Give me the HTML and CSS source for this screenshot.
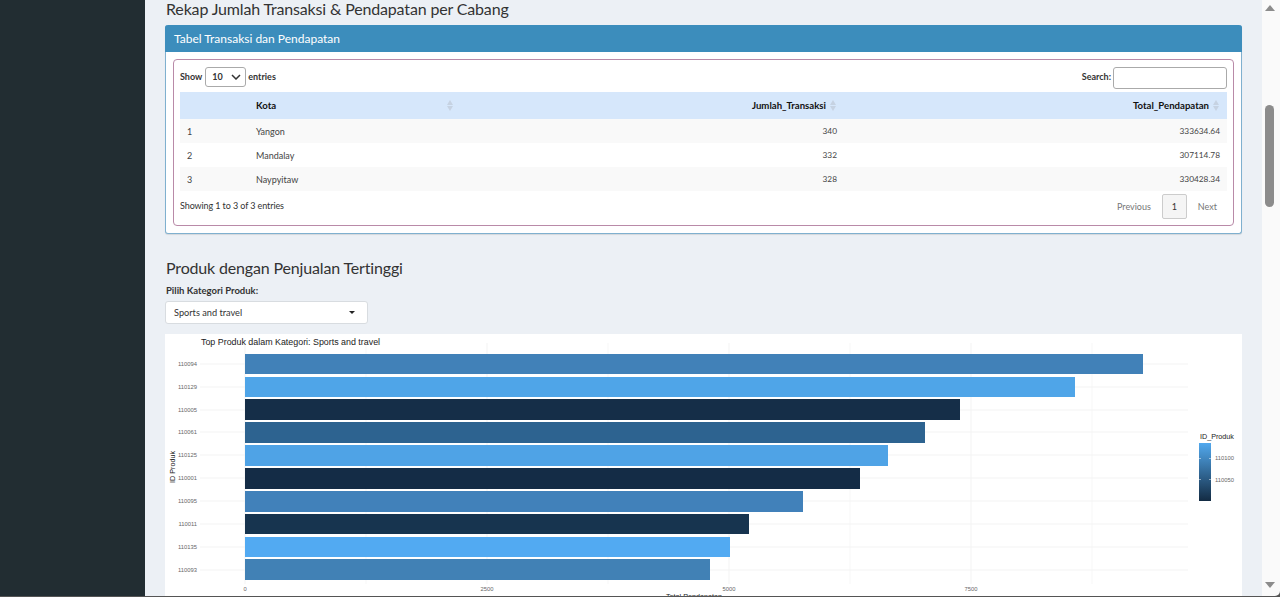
FILE: index.html
```html
<!DOCTYPE html>
<html lang="en">
<head>
  <meta charset="UTF-8" />
  <title>Dashboard Penjualan</title>
  <link rel="stylesheet" href="styles.css">
</head>
<body>
  <aside class="sidebar"></aside>

  <main class="content">
    <h3 class="section-title first">Rekap Jumlah Transaksi &amp; Pendapatan per Cabang</h3>

    <div class="box">
      <div class="box-header">Tabel Transaksi dan Pendapatan</div>
      <div class="box-body">
        <div class="dt-wrapper">
          <div class="dt-top">
            <div class="dt-length">
              <span>Show</span>
              <span class="length-select">10
                <svg width="10" height="6" viewBox="0 0 10 6"><path d="M1 1l4 4 4-4" fill="none" stroke="#333" stroke-width="1.5"/></svg>
              </span>
              <span>entries</span>
            </div>
            <div class="dt-search">
              <span>Search:</span>
              <input type="text" class="search-input">
            </div>
          </div>

          <table class="dt-table">
            <thead>
              <tr>
                <th class="col-no"></th>
                <th class="col-kota sorting">Kota</th>
                <th class="col-num col-jumlah sorting">Jumlah_Transaksi</th>
                <th class="col-num sorting">Total_Pendapatan</th>
              </tr>
            </thead>
            <tbody>
              <tr>
                <td>1</td>
                <td>Yangon</td>
                <td class="num">340</td>
                <td class="num">333634.64</td>
              </tr>
              <tr>
                <td>2</td>
                <td>Mandalay</td>
                <td class="num">332</td>
                <td class="num">307114.78</td>
              </tr>
              <tr>
                <td>3</td>
                <td>Naypyitaw</td>
                <td class="num">328</td>
                <td class="num">330428.34</td>
              </tr>
            </tbody>
          </table>

          <div class="dt-bottom">
            <div class="dt-info">Showing 1 to 3 of 3 entries</div>
            <div class="pagination">
              <span class="page-link">Previous</span>
              <span class="page-current">1</span>
              <span class="page-link">Next</span>
            </div>
          </div>
        </div>
      </div>
    </div>

    <h3 class="section-title second">Produk dengan Penjualan Tertinggi</h3>
    <label class="field-label">Pilih Kategori Produk:</label>
    <div class="picker">
      <span>Sports and travel</span>
      <span class="picker-caret"></span>
    </div>

    <div class="chart">
      <svg class="chart-svg" width="1077" height="263" viewBox="165 334 1077 263">
        <!-- grid -->
        <g stroke="#f3f3f3" stroke-width="1">
          <path d="M366 343V584M608 343V584M850 343V584M1092 343V584" stroke="#f7f7f7"/>
          <path d="M245 343V584M487 343V584M729 343V584M971 343V584"/>
          <path d="M200 364H1188M200 387H1188M200 410H1188M200 432H1188M200 455H1188M200 478H1188M200 501H1188M200 524H1188M200 547H1188M200 570H1188"/>
        </g>

        <!-- bars -->
        <rect x="245" y="354" width="898" height="20" fill="#4181b8"/>
        <rect x="245" y="377" width="830" height="20" fill="#4fa5e8"/>
        <rect x="245" y="399" width="715" height="21" fill="#152e48"/>
        <rect x="245" y="422" width="680" height="21" fill="#2d6390"/>
        <rect x="245" y="445" width="643" height="21" fill="#4fa3e6"/>
        <rect x="245" y="468" width="615" height="21" fill="#142c46"/>
        <rect x="245" y="491" width="558" height="21" fill="#4181ba"/>
        <rect x="245" y="514" width="504" height="20" fill="#17344f"/>
        <rect x="245" y="537" width="485" height="20" fill="#52aaf2"/>
        <rect x="245" y="559" width="465" height="21" fill="#4181b5"/>

        <text class="chart-title" x="201" y="345">Top Produk dalam Kategori: Sports and travel</text>

        <g class="tick" text-anchor="end">
          <text x="197" y="366">110094</text>
          <text x="197" y="389">110129</text>
          <text x="197" y="412">110005</text>
          <text x="197" y="434">110061</text>
          <text x="197" y="457">110125</text>
          <text x="197" y="480">110001</text>
          <text x="197" y="503">110095</text>
          <text x="197" y="526">110011</text>
          <text x="197" y="549">110135</text>
          <text x="197" y="572">110093</text>
        </g>

        <g class="tick" text-anchor="middle">
          <text x="245" y="591">0</text>
          <text x="487" y="591">2500</text>
          <text x="729" y="591">5000</text>
          <text x="971" y="591">7500</text>
        </g>

        <text class="axis-title" transform="translate(175 467) rotate(-90)" text-anchor="middle">ID Produk</text>
        <text class="axis-title" x="694" y="599" text-anchor="middle">Total Pendapatan</text>

        <!-- legend -->
        <defs>
          <linearGradient id="legendFill" x1="0" y1="0" x2="0" y2="1">
            <stop offset="0" stop-color="#52a9ee"/>
            <stop offset="1" stop-color="#132b43"/>
          </linearGradient>
        </defs>
        <text class="legend-title" x="1200" y="439">ID_Produk</text>
        <rect x="1199" y="443" width="12" height="58" fill="url(#legendFill)"/>
        <path d="M1199 458.500h2M1209 458.500h2M1199 479.500h2M1209 479.500h2" stroke="#fff" stroke-opacity=".5"/>
        <text class="tick" x="1215" y="460">110100</text>
        <text class="tick" x="1215" y="482">110050</text>
      </svg>
    </div>
  </main>

  <div class="scrollbar">
    <span class="arrow-up"></span>
    <span class="thumb"></span>
    <span class="arrow-down"></span>
  </div>
</body>
</html>
```

FILE: styles.css
```css
* {
  margin: 0;
  padding: 0;
  box-sizing: border-box;
}

html {
  height: 597px;
  overflow: hidden;
  background: #555;
}

body {
  display: flex;
  height: 596px;
  overflow: hidden;
  font-family: 'Lato', 'Open Sans', sans-serif;
  color: #333;
}

.sidebar {
  width: 145px;
  flex-shrink: 0;
  background: #222d32;
}

.content {
  flex: 1;
  min-width: 0;
  padding: 0 20px;
  background: #ecf0f5;
  overflow: hidden;
}

.section-title {
  padding-left: 1px;
  font-size: 16px;
  font-weight: 400;
  line-height: 20px;
  letter-spacing: -0.16px;
  color: #333;
}

.section-title.first {
  height: 26px;
  margin-top: -1px;
}

.section-title.second {
  margin-top: 24px;
}

.box {
  height: 209px;
  background: #fff;
  border: 1px solid #7fb0cf;
  border-top: 0;
  border-radius: 3px;
  box-shadow: 0 1px 1px rgba(0,0,0,0.1);
}

.box-header {
  height: 27px;
  margin: 0 -1px;
  padding: 0 9px;
  background: #3c8dbc;
  color: #fff;
  font-size: 12px;
  line-height: 27px;
  border-radius: 3px 3px 0 0;
}

.box-body {
  padding: 7px 7px 0;
}

.dt-wrapper {
  height: 167px;
  padding: 7px 6px 0;
  border: 1px solid #b98aa8;
  border-radius: 4px;
  font-size: 9px;
}

.dt-top {
  display: flex;
  justify-content: space-between;
  height: 25px;
  font-weight: 700;
}

.dt-length, .dt-search {
  display: flex;
  align-items: flex-start;
  gap: 2px;
  line-height: 20px;
}

.length-select {
  display: flex;
  align-items: center;
  justify-content: space-between;
  width: 41px;
  height: 20px;
  margin-left: 1px;
  padding: 0 4px 0 6px;
  background: #fff;
  border: 1px solid #aaa;
  border-radius: 3px;
}

.search-input {
  width: 114px;
  height: 22px;
  border: 1px solid #aaa;
  border-radius: 3px;
  background: #fff;
}

.dt-table {
  width: 100%;
  table-layout: fixed;
  border-collapse: collapse;
}

.dt-table th {
  position: relative;
  height: 27px;
  padding: 0 18px 0 7px;
  background: #d6e7fb;
  color: #111;
  font-size: 9.600px;
  font-weight: 700;
}

.col-no {
  width: 69px;
}

.col-kota {
  width: 209px;
  text-align: left;
}

.col-jumlah {
  width: 386px;
}

.col-num {
  text-align: right;
}

.sorting::before, .sorting::after {
  content: "";
  position: absolute;
  right: 5px;
  border-left: 3px solid transparent;
  border-right: 3px solid transparent;
}

.col-num.sorting::before, .col-num.sorting::after {
  right: 8px;
}

.sorting::before {
  top: 8px;
  border-bottom: 5px solid #c6d2e2;
}

.sorting::after {
  top: 14px;
  border-top: 5px solid #c6d2e2;
}

.dt-table td {
  height: 24px;
  padding: 0 7px;
  color: #444;
}

.dt-table tbody tr:nth-child(odd) {
  background: #f9f9f9;
}

.dt-table td.num {
  font-size: 8.300px;
  text-align: right;
}

.dt-bottom {
  display: flex;
  justify-content: space-between;
  padding-top: 3px;
}

.dt-info {
  padding-top: 5px;
  line-height: 14px;
  letter-spacing: -0.1px;
}

.pagination {
  display: flex;
  align-items: center;
  color: #777;
}

.page-link {
  padding: 0 10px 0 11px;
}

.page-link:first-child {
  padding: 0 11px;
}

.page-current {
  width: 25px;
  height: 25px;
  line-height: 23px;
  text-align: center;
  color: #333;
  background: #f5f5f5;
  border: 1px solid #ccc;
  border-radius: 2px;
}

.field-label {
  display: block;
  margin-top: 5px;
  padding-left: 1px;
  height: 18px;
  font-size: 9.500px;
  font-weight: 700;
  line-height: 16px;
}

.picker {
  display: flex;
  align-items: center;
  justify-content: space-between;
  width: 203px;
  height: 23px;
  padding: 0 12px 0 8px;
  background: #fff;
  border: 1px solid #d8dce0;
  border-radius: 3px;
  font-size: 9.200px;
}

.picker-caret {
  border-left: 3.500px solid transparent;
  border-right: 3.500px solid transparent;
  border-top: 3.500px solid #222;
}

.chart {
  margin-top: 10px;
  background: #fff;
  height: 263px;
}

.chart-svg {
  display: block;
}

.chart-svg text {
  font-family: 'Liberation Sans', sans-serif;
}

.chart-title {
  font-size: 8.900px;
  fill: #222;
}

.tick, .tick text {
  font-size: 5.800px;
  fill: #666;
}

.axis-title {
  font-size: 7.200px;
  fill: #222;
}

.legend-title {
  font-size: 7.200px;
  fill: #222;
}

.scrollbar {
  display: flex;
  flex-direction: column;
  align-items: center;
  width: 18px;
  flex-shrink: 0;
  padding: 5px 5px 8px 2px;
  background: #fafafa;
  border-bottom-right-radius: 5px;
}

.thumb {
  width: 9px;
  height: 102px;
  margin-top: 94px;
  background: #8c8c8c;
  border-radius: 5px;
}

.arrow-up, .arrow-down {
  border-left: 5px solid transparent;
  border-right: 5px solid transparent;
}

.arrow-up {
  border-bottom: 6px solid #8c8c8c;
}

.arrow-down {
  margin-top: auto;
  border-top: 6px solid #8c8c8c;
}
```
